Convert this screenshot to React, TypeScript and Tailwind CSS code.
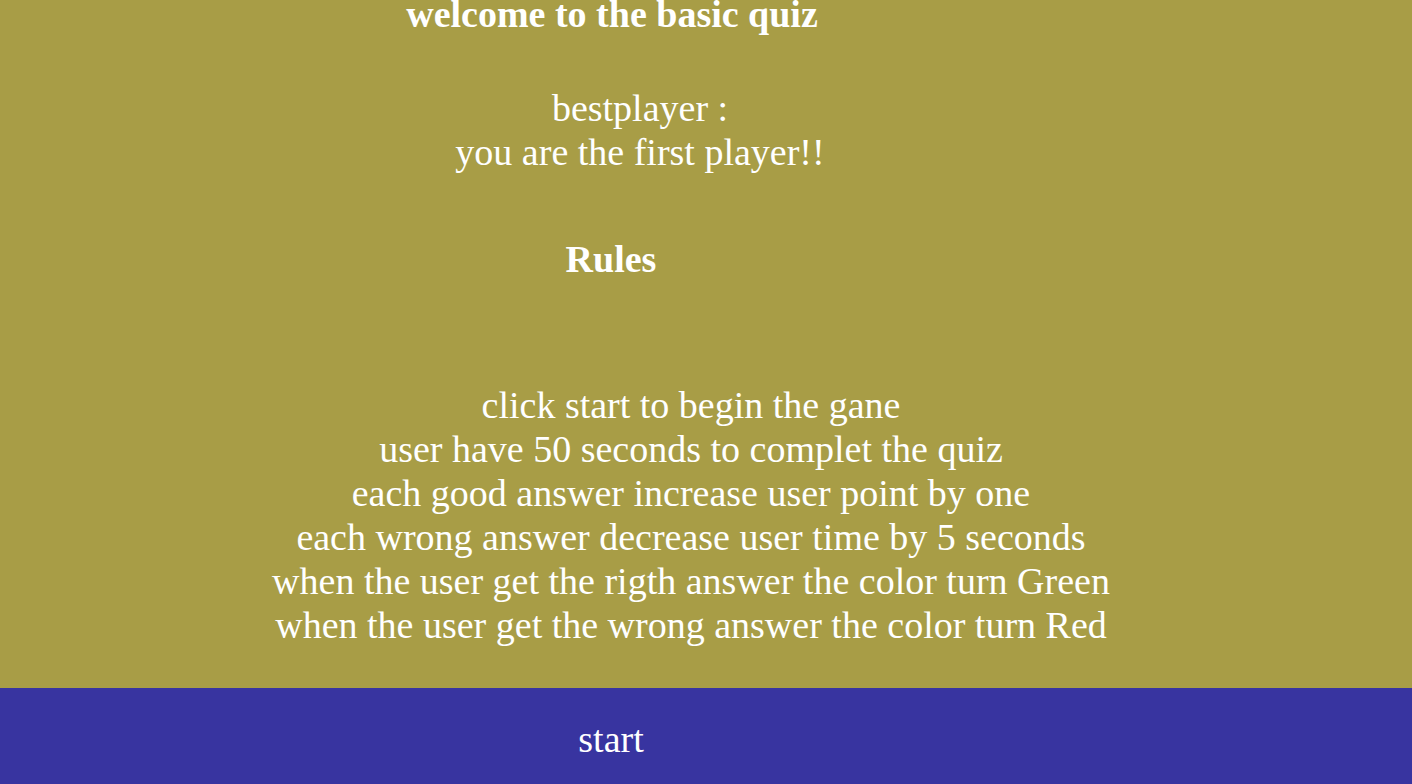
export default function App() {
  return (
    <div
      className="w-[1412px] h-[784px] overflow-hidden flex flex-col bg-[#a89d46] text-white text-[38px] leading-[44px]"
      style={{ fontFamily: '"Liberation Serif", "Times New Roman", serif' }}
    >
      <h1 className="-mt-[8px] pr-[188px] text-center font-bold">welcome to the basic quiz</h1>
      <div className="mt-[50px] pr-[132px] text-center">
        <p>bestplayer :</p>
        <p>you are the first player!!</p>
      </div>
      <h2 className="mt-[63px] pr-[190px] text-center font-bold">Rules</h2>
      <div className="mt-[102px] pr-[30px] text-center">
        <p>click start to begin the gane</p>
        <p>user have 50 seconds to complet the quiz</p>
        <p>each good answer increase user point by one</p>
        <p>each wrong answer decrease user time by 5 seconds</p>
        <p>when the user get the rigth answer the color turn Green</p>
        <p>when the user get the wrong answer the color turn Red</p>
      </div>
      <div className="mt-auto h-[96px] bg-[#3834a0] flex items-center justify-center pr-[190px] pt-[5px]">
        <button className="text-white">start</button>
      </div>
    </div>
  );
}
